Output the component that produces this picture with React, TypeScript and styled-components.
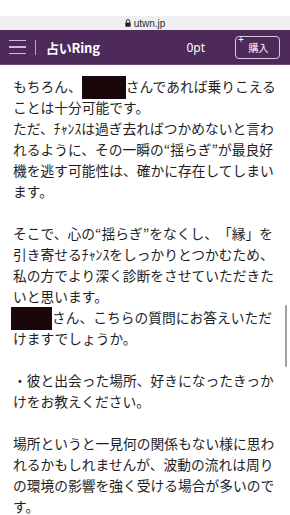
import React from "react";
import styled, { createGlobalStyle } from "styled-components";

const GlobalStyle = createGlobalStyle`
  html, body {
    margin: 0;
    padding: 0;
    background: #ffffff;
  }
  body {
    font-family: "Noto Sans CJK JP", "Noto Sans", sans-serif;
    overflow: hidden;
  }
`;

const Screen = styled.div`
  position: relative;
  width: 290px;
  height: 515px;
  overflow: hidden;
  background: #ffffff;
`;

const StatusGap = styled.div`
  height: 16px;
  background: #ffffff;
`;

const UrlBar = styled.div`
  height: 14px;
  background: #f0f0f0;
  display: flex;
  align-items: center;
  justify-content: center;
  gap: 3px;
  font-family: "Liberation Sans", Arial, sans-serif;
  font-size: 10px;
  color: #2a2a2a;
`;

const Header = styled.header`
  height: 34px;
  background: #4d2a5a;
  border-bottom: 1px solid #6a4c76;
  display: flex;
  align-items: center;
  padding: 0 10px 0 9px;
`;

const Burger = styled.div`
  width: 17px;
  display: flex;
  flex-direction: column;
  gap: 5px;
  span {
    display: block;
    height: 1.5px;
    background: #cdbbd6;
  }
`;

const Divider = styled.div`
  width: 1px;
  height: 15px;
  background: #b9a4c4;
  margin: 0 10px 0 9px;
`;

const Brand = styled.div`
  color: #ffffff;
  font-weight: 700;
  font-size: 13px;
  letter-spacing: -0.2px;
  flex: 1;
`;

const Points = styled.div`
  color: #ffffff;
  font-family: "Noto Sans", sans-serif;
  font-size: 12px;
  margin-right: 30px;
`;

const BuyButton = styled.div`
  position: relative;
  width: 41px;
  height: 21px;
  border: 1px solid #d9cbe0;
  border-radius: 4px;
  display: flex;
  align-items: center;
  justify-content: center;
  color: #ffffff;
  font-size: 10px;
  padding-left: 2px;
  box-sizing: content-box;
`;

const Plus = styled.span`
  position: absolute;
  left: 2px;
  top: -3px;
  font-size: 10px;
  font-family: "Liberation Sans", sans-serif;
  color: #ffffff;
`;

const Article = styled.main`
  padding: 11px 0 0 13px;
  color: #1e1e1e;
  font-size: 13.75px;
  line-height: 21px;
  text-spacing-trim: space-all;
`;

const Paragraph = styled.p`
  margin: 0 0 21px;
`;

const Line = styled.div`
  white-space: nowrap;
  height: 21px;
`;

const Redacted = styled.span<{ $w: number; $shift?: number }>`
  display: inline-block;
  width: ${(p) => p.$w}px;
  height: 23px;
  margin-left: ${(p) => p.$shift ?? 0}px;
  background: #1a0709;
  vertical-align: middle;
  position: relative;
  top: -1px;
`;

const ScrollThumb = styled.div`
  position: absolute;
  right: 3px;
  top: 305px;
  width: 2.5px;
  height: 62px;
  border-radius: 2px;
  background: #a3a3a3;
`;

const Lock = () => (
  <svg width="6" height="8" viewBox="0 0 6 8">
    <path d="M1.3 3.5V2.3a1.7 1.7 0 0 1 3.4 0v1.2" fill="none" stroke="#222" strokeWidth="1" />
    <rect x="0.3" y="3.4" width="5.4" height="4.3" rx="0.6" fill="#222" />
  </svg>
);

export default function App() {
  return (
    <Screen>
      <GlobalStyle />
      <StatusGap />
      <UrlBar>
        <Lock />
        <span>utwn.jp</span>
      </UrlBar>
      <Header>
        <Burger>
          <span />
          <span />
          <span />
        </Burger>
        <Divider />
        <Brand>占いRing</Brand>
        <Points>0pt</Points>
        <BuyButton>
          <Plus>+</Plus>
          購入
        </BuyButton>
      </Header>
      <Article>
        <Paragraph>
          <Line>
            もちろん、<Redacted $w={44} />さんであれば乗りこえる
          </Line>
          <Line>ことは十分可能です。</Line>
          <Line>ただ、ﾁｬﾝｽは過ぎ去ればつかめないと言わ</Line>
          <Line>れるように、その一瞬の“揺らぎ”が最良好</Line>
          <Line>機を逃す可能性は、確かに存在してしまい</Line>
          <Line>ます。</Line>
        </Paragraph>
        <Paragraph>
          <Line>そこで、心の“揺らぎ”をなくし、「縁」を</Line>
          <Line>引き寄せるﾁｬﾝｽをしっかりとつかむため、</Line>
          <Line>私の方でより深く診断をさせていただきた</Line>
          <Line>いと思います。</Line>
          <Line>
            <Redacted $w={41} $shift={-2} />さん、こちらの質問にお答えいただ
          </Line>
          <Line>けますでしょうか。</Line>
        </Paragraph>
        <Paragraph>
          <Line>・彼と出会った場所、好きになったきっか</Line>
          <Line>けをお教えください。</Line>
        </Paragraph>
        <Paragraph>
          <Line>場所というと一見何の関係もない様に思わ</Line>
          <Line>れるかもしれませんが、波動の流れは周り</Line>
          <Line>の環境の影響を強く受ける場合が多いので</Line>
          <Line>す。</Line>
        </Paragraph>
      </Article>
      <ScrollThumb />
    </Screen>
  );
}
